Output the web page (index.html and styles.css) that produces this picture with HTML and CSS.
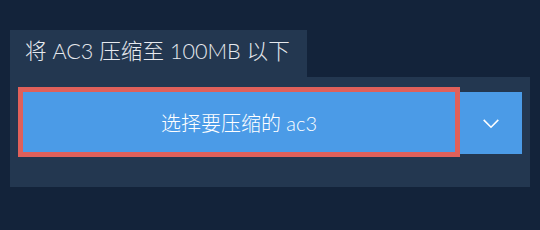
FILE: index.html
```html
<!DOCTYPE html>
<html lang="zh">
<head>
<meta charset="utf-8">
<link rel="stylesheet" href="styles.css">
</head>
<body>
<div class="wrap">
  <div class="tab">将 AC3 压缩至 100MB 以下</div>
  <div class="panel">
    <div class="row">
      <button class="pick">选择要压缩的 ac3</button>
      <button class="drop" aria-label="更多">
        <svg width="16" height="10" viewBox="0 0 16 10"><path d="M0.7 0.9 L8 8.2 L15.3 0.9" fill="none" stroke="#fff" stroke-width="1.6"/></svg>
      </button>
    </div>
  </div>
</div>
</body>
</html>
```
FILE: styles.css
```css
html, body {
  margin: 0;
  padding: 0;
  background: #13233a;
  width: 540px;
  height: 230px;
  overflow: hidden;
}
.wrap {
  padding: 30px 10px 0 10px;
  font-family: Lato, "Noto Sans CJK SC", sans-serif;
}
.tab {
  display: block;
  width: 297px;
  background: #233750;
  color: #e6e9ee;
  font-size: 21.6px;
  font-weight: 300;
  height: 47px;
  line-height: 42px;
  padding: 0 0 0 15px;
  box-sizing: border-box;
  white-space: nowrap;
}
.panel {
  background: #233750;
  height: 110px;
  box-sizing: border-box;
  padding: 10px 8px 0 8px;
}
.row {
  display: flex;
  align-items: flex-start;
}
.pick {
  width: 442px;
  height: 70px;
  box-sizing: border-box;
  border: 5px solid #e0605a;
  background: #4b9be7;
  color: #ffffff;
  font-family: Lato, "Noto Sans CJK SC", sans-serif;
  font-size: 20px;
  font-weight: 300;
  margin: 0;
  padding: 0;
}
.drop {
  width: 62px;
  height: 62px;
  margin: 5px 0 0 0;
  padding: 0;
  border: none;
  background: #4b9be7;
  display: flex;
  align-items: center;
  justify-content: center;
}
.drop svg {
  display: block;
  margin-top: 2px;
}
```
